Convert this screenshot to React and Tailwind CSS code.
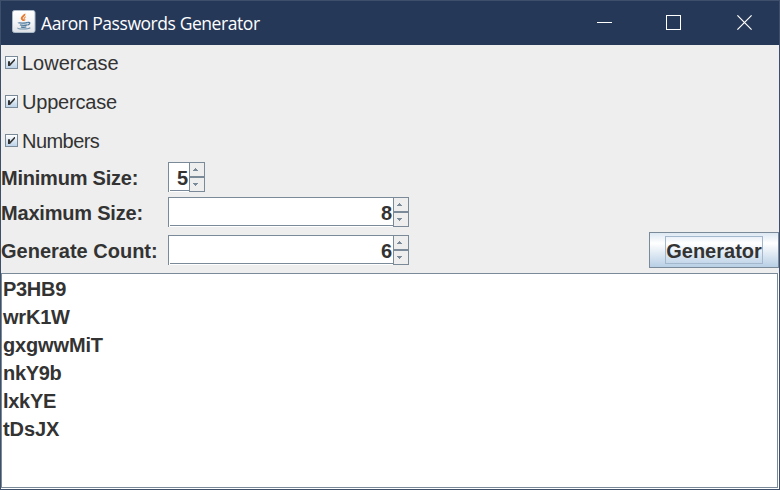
const passwords = [
  { text: "P3HB9", tracking: "tracking-[-0.3px]" },
  { text: "wrK1W", tracking: "tracking-[-0.2px]" },
  { text: "gxgwwMiT", tracking: "tracking-[-0.15px]" },
  { text: "nkY9b", tracking: "tracking-[-0.3px]" },
  { text: "lxkYE", tracking: "tracking-[-0.3px]" },
  { text: "tDsJX", tracking: "tracking-[-0.1px]" },
];

function JavaIcon() {
  return (
    <svg width="24" height="24" viewBox="0 0 24 24" className="block shrink-0">
      <defs>
        <linearGradient id="tile" x1="0" y1="0" x2="0" y2="1">
          <stop offset="0" stopColor="#ffffff" />
          <stop offset="0.55" stopColor="#f3f4f6" />
          <stop offset="1" stopColor="#dde1e6" />
        </linearGradient>
      </defs>
      <rect x="0.5" y="0.5" width="22.5" height="22" rx="2" fill="url(#tile)" stroke="#a9b9c8" />
      <path d="M12.5 3.800c.8 1.900-3 2.900-2.800 4.500.2 1.200 1.700 1.400 1.700 2.600" fill="none" stroke="#e8792b" strokeWidth="1.900" />
      <path d="M14 6.800c-2 .9-2.300 1.600-1.400 2.400.5.600.1 1.200-.4 1.600" fill="none" stroke="#e99a61" strokeWidth="1.200" />
      <path d="M6.500 12.500c-.6.800 8 .8 9.300-.1M8 14.800c1 .8 6 .7 7 .1M9 16.800c1.200.6 4.400.6 5.300 0M16 12.400c2.700-.6 2.300 1.900-.5 2.600" fill="none" stroke="#527d9e" strokeWidth="1.300" />
      <path d="M6 17.800c-1.500 1.500 10 1.700 12.300-.1" fill="none" stroke="#6d91ad" strokeWidth="1.100" />
    </svg>
  );
}

function TitleBar() {
  return (
    <header className="flex h-[44px] shrink-0 items-start bg-[#263858] text-white">
      <div className="flex h-[44px] grow pl-[11px] pt-[9px]">
        <JavaIcon />
        <h1 className="ml-[5px] mt-[1px] whitespace-nowrap font-['Open_Sans',sans-serif] text-[17.5px] leading-[24px] tracking-[-0.43px]">
          Aaron Passwords Generator
        </h1>
      </div>
      <div className="mt-[14px] flex pr-[27px]">
        <svg width="155" height="15" viewBox="0 0 155 15" fill="none" stroke="#fff" className="block">
          <path d="M0 7.500h15M69.500.5h14v14h-14z" shapeRendering="crispEdges" />
          <path d="M140.400.4l14.200 14.200M154.600.4l-14.200 14.200" strokeWidth="1.200" />
        </svg>
      </div>
    </header>
  );
}

function Checkbox({ label, tracking }) {
  return (
    <div className="flex h-[39px] items-center pl-[4px]">
      <span className="flex size-[13px] items-center justify-center border border-[#7a8a99] bg-linear-to-b from-white to-[#bdd3e8]">
        <svg width="9" height="9" viewBox="0 0 9 9" className="block">
          <path d="M1 3.200h2v2.200L7.300 1H8v1.500L3 8H1z" fill="#333" />
        </svg>
      </span>
      <span className={`ml-[4px] text-[20px] leading-[24px] ${tracking}`}>{label}</span>
    </div>
  );
}

function Arrow({ down }) {
  return (
    <svg width="5" height="3" viewBox="0 0 5 3" shapeRendering="crispEdges" className="block">
      <path d={down ? "M0 0h5v1H4v1H3v1H2V2H1V1H0z" : "M2 0h1v1h1v1h1v1H0V2h1V1h1z"} fill="#7a8a99" />
    </svg>
  );
}

function Spinner({ value, width }) {
  return (
    <div className={`flex h-[30px] ${width}`}>
      <div className="flex h-[30px] grow flex-col border-l border-t border-[#7a8a99] bg-white">
        <div className="h-[27px] text-right text-[20px] font-bold leading-[30px]">
          <span className="pr-[1px]">{value}</span>
        </div>
        <div className="ml-[1px] h-px bg-[#7a8a99]" />
      </div>
      <div className="flex w-[16px] shrink-0 flex-col">
        <div className="flex h-[15px] items-center justify-center border border-[#7a8a99] pr-[3px]">
          <Arrow />
        </div>
        <div className="flex h-[15px] items-center justify-center border border-[#7a8a99] pr-[3px]">
          <Arrow down />
        </div>
      </div>
    </div>
  );
}

function Field({ label, tracking, value, width }) {
  return (
    <div className="flex h-[30px]">
      <span className={`w-[167px] whitespace-nowrap text-[20px] font-bold leading-[33px] ${tracking}`}>{label}</span>
      <Spinner value={value} width={width} />
    </div>
  );
}

export default function App() {
  return (
    <main className="flex h-[490px] w-[780px] flex-col border border-[#3e4f6c] bg-[#eeeeee] font-['Liberation_Sans',Arial,sans-serif] text-[#333333]">
      <TitleBar />
      <section className="h-[117px] shrink-0 overflow-hidden">
        <div className="-mt-[2px]">
          <Checkbox label="Lowercase" tracking="tracking-normal" />
          <Checkbox label="Uppercase" tracking="tracking-[-0.2px]" />
          <Checkbox label="Numbers" tracking="tracking-[-0.55px]" />
        </div>
      </section>
      <section className="flex h-[111px] shrink-0 justify-between">
        <div>
          <Field label="Minimum Size:" tracking="tracking-[-0.22px]" value={5} width="w-[37px]" />
          <div className="h-[5px]" />
          <Field label="Maximum Size:" tracking="tracking-[-0.2px]" value={8} width="w-[241px]" />
          <div className="h-[8px]" />
          <Field label="Generate Count:" tracking="tracking-normal" value={6} width="w-[241px]" />
        </div>
        <button className="mt-[70px] flex h-[36px] w-[130px] items-center justify-center border border-[#7a8a99] bg-linear-to-b from-[#dde8f3] via-white via-30% to-[#b8cfe5]">
          <span className="h-[28px] w-[98px] border border-[#a3b8cc] text-center text-[20px] font-bold leading-[28px]">
            Generator
          </span>
        </button>
      </section>
      <section className="flex grow flex-col bg-white pb-px pr-px">
        <ul className="grow border border-[#7a8a99] pl-[1px] pt-[1px] text-[20px] font-bold leading-[28px]">
          {passwords.map((p) => (
            <li key={p.text} className={p.tracking}>
              {p.text}
            </li>
          ))}
        </ul>
      </section>
    </main>
  );
}
